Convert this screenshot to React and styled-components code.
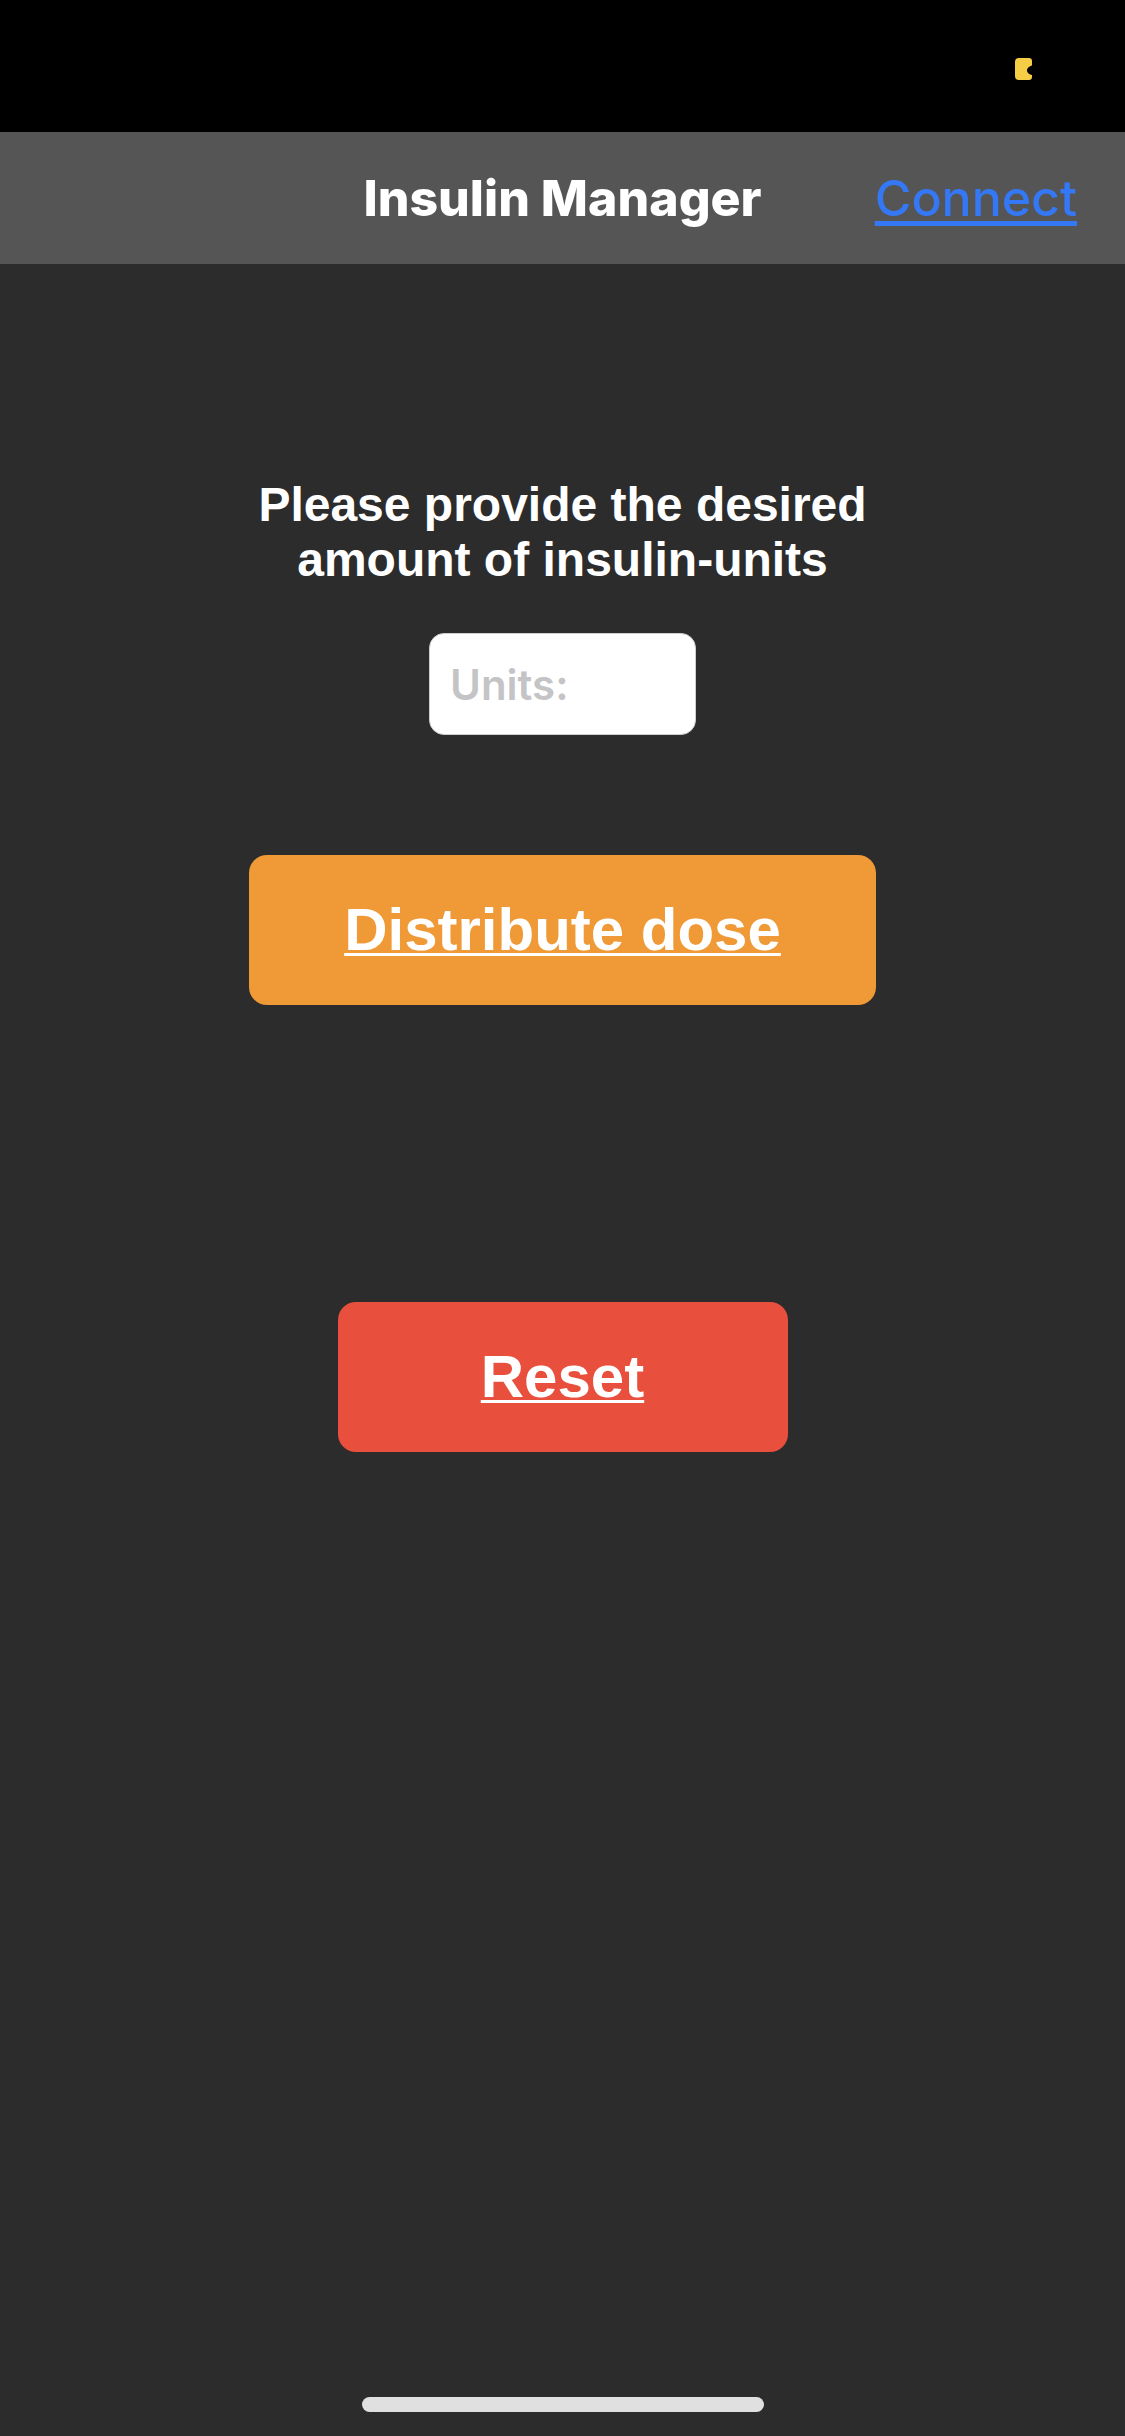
import React, { useState } from "react";
import styled, { createGlobalStyle } from "styled-components";

const system = `Inter, "Liberation Sans", sans-serif`;
const helvetica = `"Liberation Sans", Arial, sans-serif`;

const GlobalStyle = createGlobalStyle`
  *, *::before, *::after { box-sizing: border-box; }
  body { margin: 0; background: #2c2c2c; }
`;

const Screen = styled.div`
  display: flex;
  flex-direction: column;
  min-height: 100vh;
  background: #2c2c2c;
  color: #ffffff;
  font-family: ${helvetica};
`;

const StatusBar = styled.div`
  display: flex;
  justify-content: flex-end;
  height: 132px;
  padding: 58px 93px 0 0;
  background: #000000;
`;

const NavBar = styled.header`
  display: grid;
  grid-template-columns: 1fr auto 1fr;
  align-items: center;
  height: 132px;
  padding: 0 48px;
  background: #555555;
  font-family: ${system};
  font-size: 50px;
  line-height: 60px;
`;

const NavTitle = styled.h1`
  grid-column: 2;
  margin: 0;
  font-size: inherit;
  font-weight: 800;
`;

const NavLink = styled.a`
  justify-self: end;
  color: #3478f6;
  font-weight: 500;
  text-decoration: underline;
  text-decoration-thickness: 5px;
  text-underline-offset: 5px;
`;

const Form = styled.form`
  flex: 1;
  display: flex;
  flex-direction: column;
  align-items: center;
  padding: 213px 48px 0;
`;

const Prompt = styled.label`
  max-width: 640px;
  font-size: 48px;
  font-weight: 700;
  line-height: 55px;
  text-align: center;
`;

const UnitsInput = styled.input`
  width: 267px;
  height: 102px;
  margin: 46px 0 120px;
  padding: 0 20px;
  border: 1px solid #cdcdcd;
  border-radius: 15px;
  background: #ffffff;
  color: #000000;
  font-family: ${system};
  font-size: 42px;
  font-weight: 600;

  &::placeholder {
    color: #c4c4c6;
    opacity: 1;
  }
`;

const ActionButton = styled.button`
  width: ${({ $width }) => $width}px;
  max-width: 100%;
  height: 150px;
  padding: 0;
  border: 0;
  border-radius: 18px;
  background: ${({ $color }) => $color};
  color: #ffffff;
  font-family: ${helvetica};
  font-size: 60px;
  font-weight: 700;
  line-height: 70px;
  text-decoration: underline;
  text-decoration-thickness: 3px;
  text-underline-offset: 3px;
  text-decoration-skip-ink: none;

  & + & {
    margin-top: 297px;
  }
`;

const HomeArea = styled.footer`
  display: flex;
  justify-content: center;
  padding-bottom: 24px;
`;

const HomeIndicator = styled.div`
  width: 402px;
  height: 15px;
  border-radius: 8px;
  background: #e0e0e0;
`;

const BatteryIcon = () => (
  <svg width="17" height="22" viewBox="0 0 17 22" aria-hidden="true">
    <path
      fill="#f5ce46"
      d="M4 0H14Q17 0 17 3V7.5C14.5 8 12 10 12 12.3C12 15 14.5 16.7 17 17V19Q17 22 14 22H4Q0 22 0 18V4Q0 0 4 0Z"
    />
  </svg>
);

export default function App() {
  const [units, setUnits] = useState("");

  return (
    <Screen>
      <GlobalStyle />
      <StatusBar>
        <BatteryIcon />
      </StatusBar>
      <NavBar>
        <NavTitle>Insulin Manager</NavTitle>
        <NavLink href="#connect">Connect</NavLink>
      </NavBar>
      <Form onSubmit={(event) => event.preventDefault()}>
        <Prompt htmlFor="units">
          Please provide the desired amount of insulin-units
        </Prompt>
        <UnitsInput
          id="units"
          inputMode="decimal"
          placeholder="Units:"
          value={units}
          onChange={(event) => setUnits(event.target.value)}
        />
        <ActionButton type="submit" $width={627} $color="#ef9a36">
          Distribute dose
        </ActionButton>
        <ActionButton
          type="button"
          $width={450}
          $color="#e94f3d"
          onClick={() => setUnits("")}
        >
          Reset
        </ActionButton>
      </Form>
      <HomeArea>
        <HomeIndicator />
      </HomeArea>
    </Screen>
  );
}
